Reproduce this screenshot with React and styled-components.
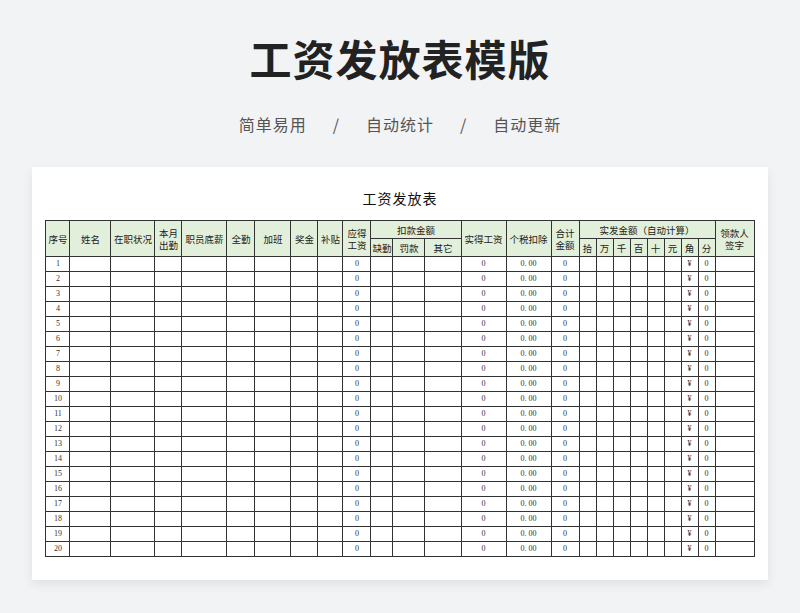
import React from "react";
import styled, { createGlobalStyle } from "styled-components";

const Global = createGlobalStyle`
  body { margin: 0; background: #f2f3f5; font-family: "Noto Sans CJK SC", "Noto Sans", sans-serif; }
`;

const Page = styled.div`
  width: 800px;
  height: 613px;
  display: flex;
  flex-direction: column;
  align-items: center;
  overflow: hidden;
`;

const Title = styled.h1`
  margin: 32px 0 0;
  font-size: 42px;
  line-height: 52px;
  font-weight: 700;
  color: #222;
  letter-spacing: 1px;
`;

const Sub = styled.div`
  margin-top: 28px;
  display: flex;
  gap: 26px;
  font-size: 16px;
  line-height: 24px;
  color: #555;
  letter-spacing: 1px;
`;

const Card = styled.div`
  margin-top: 31px;
  width: 736px;
  height: 413px;
  background: #fff;
  box-shadow: 0 4px 10px rgba(0, 0, 0, 0.08);
  display: flex;
  flex-direction: column;
  align-items: center;
`;

const SheetTitle = styled.div`
  margin-top: 21px;
  height: 20px;
  font-size: 14px;
  line-height: 20px;
  color: #111;
  letter-spacing: 1px;
`;

const Table = styled.table`
  margin-top: 12px;
  border-collapse: collapse;
  table-layout: fixed;
  width: 708px;
  font-size: 9px;
  color: #222;
  td, th {
    border: 1px solid #333;
    padding: 0;
    text-align: center;
    overflow: hidden;
    white-space: nowrap;
  }
  th {
    background: #e2efda;
    font-weight: 400;
    height: 17px;
    font-size: 9.5px;
    line-height: 12px;
  }
  td {
    height: 14px;
    line-height: 10px;
    color: #333;
    font-size: 8px;
    font-family: "Liberation Serif", serif;
    -webkit-font-smoothing: antialiased;
  }
`;

const widths = [24, 41, 44, 27, 45, 28, 36, 27, 25, 28, 22, 32, 36, 45, 45, 28, 17, 17, 17, 17, 17, 17, 17, 17, 39];
const digits = ["拾", "万", "千", "百", "十", "元", "角", "分"];

export default function App() {
  const rows = Array.from({ length: 20 }, (_, i) => i + 1);
  return (
    <Page>
      <Global />
      <Title>工资发放表模版</Title>
      <Sub>
        <span>简单易用</span><span>/</span><span>自动统计</span><span>/</span><span>自动更新</span>
      </Sub>
      <Card>
        <SheetTitle>工资发放表</SheetTitle>
        <Table>
          <colgroup>
            {widths.map((w, i) => <col key={i} style={{ width: w }} />)}
          </colgroup>
          <thead>
            <tr>
              <th rowSpan={2}>序号</th>
              <th rowSpan={2}>姓名</th>
              <th rowSpan={2}>在职状况</th>
              <th rowSpan={2}>本月<br />出勤</th>
              <th rowSpan={2}>职员底薪</th>
              <th rowSpan={2}>全勤</th>
              <th rowSpan={2}>加班</th>
              <th rowSpan={2}>奖金</th>
              <th rowSpan={2}>补贴</th>
              <th rowSpan={2}>应得<br />工资</th>
              <th colSpan={3}>扣款金额</th>
              <th rowSpan={2}>实得工资</th>
              <th rowSpan={2}>个税扣除</th>
              <th rowSpan={2}>合计<br />金额</th>
              <th colSpan={8}>实发金额（自动计算）</th>
              <th rowSpan={2}>领款人<br />签字</th>
            </tr>
            <tr>
              <th>缺勤</th>
              <th>罚款</th>
              <th>其它</th>
              {digits.map((d) => <th key={d}>{d}</th>)}
            </tr>
          </thead>
          <tbody>
            {rows.map((n) => (
              <tr key={n}>
                <td>{n}</td>
                {Array.from({ length: 8 }, (_, i) => <td key={i} />)}
                <td>0</td>
                <td /><td /><td />
                <td>0</td>
                <td>0. 00</td>
                <td>0</td>
                {Array.from({ length: 6 }, (_, i) => <td key={"d" + i} />)}
                <td>¥</td>
                <td>0</td>
                <td />
              </tr>
            ))}
          </tbody>
        </Table>
      </Card>
    </Page>
  );
}
